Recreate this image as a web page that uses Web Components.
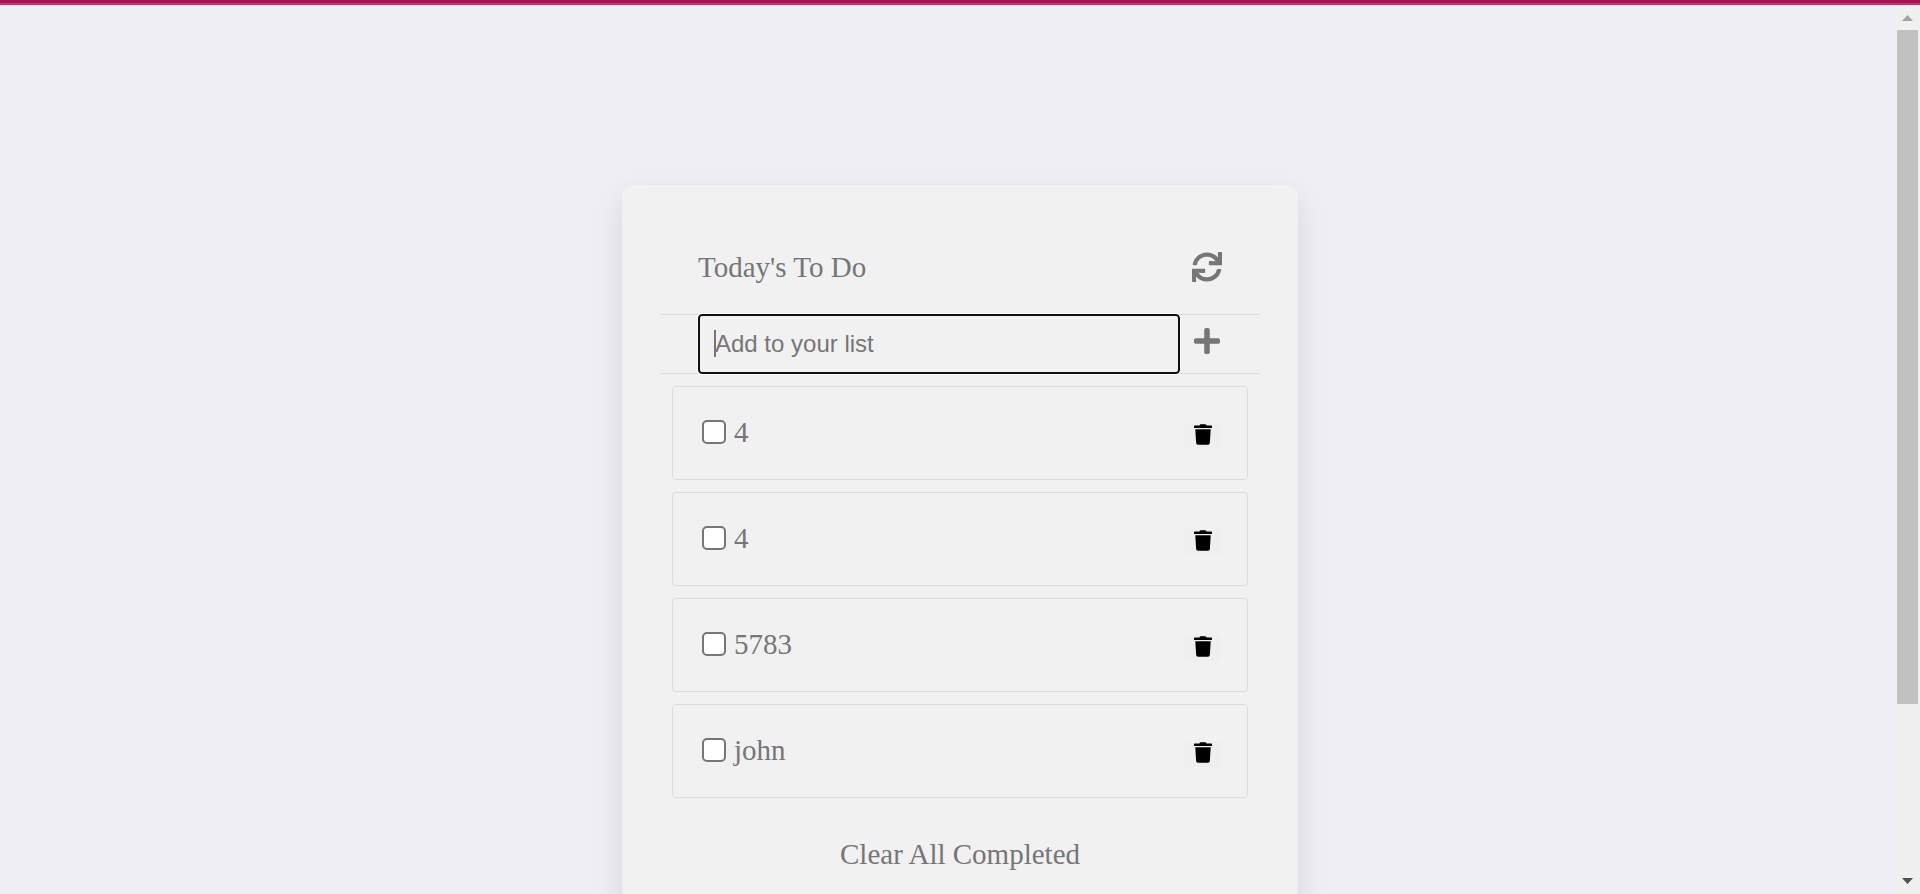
<!DOCTYPE html>
<html lang="en">
<head>
<meta charset="utf-8">
<title>To Do List</title>
<style>
  html, body { height: 100%; margin: 0; }
  body { background: #eeeef4; color: #767676; font: 29px/34px "Liberation Serif", "Times New Roman", serif; overflow: hidden; }
</style>
</head>
<body>
<todo-app></todo-app>
<script>
const define = (name, html, setup) => {
  const template = document.createElement('template');
  template.innerHTML = html;
  customElements.define(name, class extends HTMLElement {
    constructor() {
      super();
      this.attachShadow({ mode: 'open' }).append(template.content.cloneNode(true));
    }
    connectedCallback() { if (setup) setup(this, this.shadowRoot); }
  });
};

define('icon-sync', `
<style>:host{display:block;width:30px;height:30px} svg{display:block;width:100%;height:100%}</style>
<svg viewBox="0 0 512 512" fill="currentColor" aria-hidden="true"><path d="M440.65 12.57l4 82.77A247.16 247.16 0 0 0 255.83 8C134.73 8 33.91 94.92 12.29 209.82A12 12 0 0 0 24.09 224h49.05a12 12 0 0 0 11.67-9.26 175.91 175.91 0 0 1 317-56.94l-101.46-4.86a12 12 0 0 0-12.57 12v47.41a12 12 0 0 0 12 12H500a12 12 0 0 0 12-12V12a12 12 0 0 0-12-12h-47.37a12 12 0 0 0-11.98 12.57zM255.83 432a175.61 175.61 0 0 1-146-77.8l101.8 4.87a12 12 0 0 0 12.57-12v-47.4a12 12 0 0 0-12-12H12a12 12 0 0 0-12 12V500a12 12 0 0 0 12 12h47.35a12 12 0 0 0 12-12.6l-4.15-82.57A247.17 247.17 0 0 0 255.83 504c121.11 0 221.93-86.92 243.55-201.82a12 12 0 0 0-11.8-14.18h-49.05a12 12 0 0 0-11.67 9.26A175.86 175.86 0 0 1 255.83 432z"/></svg>`);

define('icon-plus', `
<style>:host{display:block;width:26px;height:26px} svg{display:block;width:100%;height:100%}</style>
<svg viewBox="0 32 448 448" fill="currentColor" aria-hidden="true"><path d="M416 208H272V64c0-17.67-14.33-32-32-32h-32c-17.67 0-32 14.33-32 32v144H32c-17.67 0-32 14.33-32 32v32c0 17.67 14.33 32 32 32h144v144c0 17.67 14.33 32 32 32h32c17.67 0 32-14.33 32-32V304h144c17.67 0 32-14.33 32-32v-32c0-17.67-14.33-32-32-32z"/></svg>`);

define('icon-trash', `
<style>:host{display:block;width:18px;height:21px} svg{display:block;width:100%;height:100%}</style>
<svg viewBox="0 0 448 512" fill="currentColor" aria-hidden="true"><path d="M432 32H312l-9.4-18.7A24 24 0 0 0 281.1 0H166.8a23.72 23.72 0 0 0-21.4 13.3L136 32H16A16 16 0 0 0 0 48v32a16 16 0 0 0 16 16h416a16 16 0 0 0 16-16V48a16 16 0 0 0-16-16zM53.2 467a48 48 0 0 0 47.9 45h245.8a48 48 0 0 0 47.9-45L416 128H32z"/></svg>`);

define('todo-header', `
<style>
  :host{display:flex;align-items:center;justify-content:space-between;box-sizing:border-box;height:73px;padding:0 38px 22px}
  h1{margin:0;font:inherit}
  button{padding:0;border:0;background:none;color:inherit;cursor:pointer}
</style>
<h1><slot></slot></h1>
<button type="button" aria-label="Refresh list"><icon-sync></icon-sync></button>`);

define('todo-entry', `
<style>
  :host{display:block}
  form{display:flex;align-items:center;gap:14px;margin:0;padding:0 40px 0 38px;border:solid #dcdcdc;border-width:1px 0}
  input{flex:1;min-width:0;box-sizing:border-box;height:60px;margin:-1px 0;padding:0 15px;border:2px solid #101010;border-radius:4px;outline:1px solid #fff;color:inherit;caret-color:transparent;
    font:24px/28px "Liberation Sans",Arial,sans-serif;
    background:#f1f1f1 linear-gradient(#767676,#767676) 14px 14px/2px 27px no-repeat}
  input::placeholder{color:#767676;opacity:1}
  button{padding:0 0 6px;border:0;background:none;color:inherit;cursor:pointer}
</style>
<form>
  <input type="text" placeholder="Add to your list" aria-label="Add to your list">
  <button type="submit" aria-label="Add item"><icon-plus></icon-plus></button>
</form>`, (host, root) => {
  root.querySelector('form').addEventListener('submit', e => e.preventDefault());
});

define('todo-item', `
<style>
  :host{display:flex;align-items:center;justify-content:space-between;box-sizing:border-box;height:94px;padding:0 26px 0 29px;border:1px solid #dcdcdc;border-radius:4px}
  label{display:flex;align-items:center;gap:8px;padding-bottom:2px}
  input{appearance:none;box-sizing:border-box;width:24px;height:24px;margin:0;border:2px solid #767676;border-radius:5px;background:#fff}
  input:checked{background:#767676}
  button{display:flex;justify-content:center;box-sizing:border-box;width:36px;height:26px;margin:6px 0 0;padding:1px 0 0;border:0;background:#efefef;color:#000;cursor:pointer}
</style>
<label><input type="checkbox"><span><slot></slot></span></label>
<button type="button" aria-label="Delete item"><icon-trash></icon-trash></button>`, (host, root) => {
  root.querySelector('button').addEventListener('click', () => host.remove());
});

define('todo-card', `
<style>
  :host{display:flex;flex-direction:column;box-sizing:border-box;width:100%;max-width:676px;padding:56px 38px 64px;border-radius:10px;background:#f1f1f1;box-shadow:0 12px 30px rgba(0,0,0,.1)}
  .list{display:flex;flex-direction:column;gap:12px;padding:12px 12px 0}
  .clear{align-self:center;margin-top:39px;padding:0;border:0;background:none;color:inherit;font:inherit;cursor:pointer}
</style>
<todo-header>Today's To Do</todo-header>
<todo-entry></todo-entry>
<div class="list"><slot></slot></div>
<button class="clear" type="button">Clear All Completed</button>`);

define('scroll-rail', `
<style>
  :host{display:flex;flex-direction:column;align-items:center;box-sizing:border-box;width:25px;padding:10px 0;background:#f0f0f0}
  svg{display:block;width:11px;height:6px}
  .track{flex:1;width:21px;margin:9px 0 16px;min-height:0}
  .thumb{height:81%;background:#c1c1c1}
</style>
<svg viewBox="0 0 11 6" fill="#a3a3a3" aria-hidden="true"><path d="M0 6L5.5 0L11 6z"/></svg>
<div class="track"><div class="thumb"></div></div>
<svg viewBox="0 0 11 6" fill="#505050" aria-hidden="true"><path d="M0 0H11L5.5 6z"/></svg>`);

define('todo-app', `
<style>
  :host{display:flex;flex-direction:column;height:100vh}
  .bar{flex:none;height:3px;border-bottom:2px solid #b83a73;background:#9f1853}
  .view{position:relative;flex:1;min-height:0;display:flex}
  main{flex:1;overflow-y:auto;scrollbar-width:none;display:flex;flex-direction:column;align-items:center;padding:180px 0}
  todo-card{flex:none}
  scroll-rail{position:absolute;top:0;right:0;bottom:0}
</style>
<div class="bar"></div>
<div class="view">
  <main>
    <todo-card>
      <todo-item>4</todo-item>
      <todo-item>4</todo-item>
      <todo-item>5783</todo-item>
      <todo-item>john</todo-item>
    </todo-card>
  </main>
  <scroll-rail></scroll-rail>
</div>`);
</script>
</body>
</html>
